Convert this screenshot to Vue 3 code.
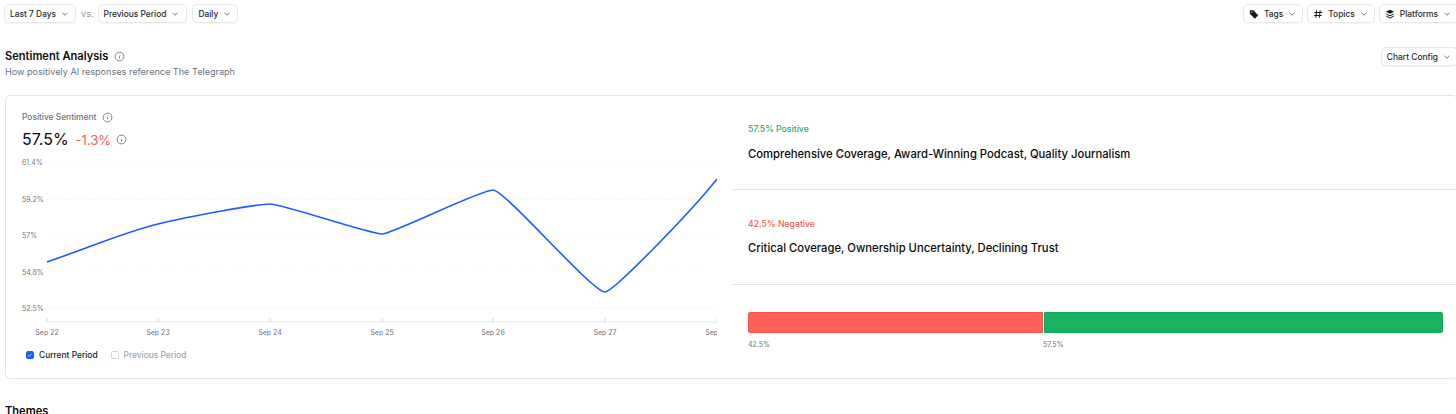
<script setup>
const filtersLeft = ["Last 7 Days"];
const filtersMid = ["Previous Period", "Daily"];
const yLabels = [
  { text: "61.4%", y: 162 },
  { text: "59.2%", y: 199 },
  { text: "57%", y: 235 },
  { text: "54.8%", y: 272 },
  { text: "52.5%", y: 308 },
];
const xLabels = [
  { text: "Sep 22", x: 47 },
  { text: "Sep 23", x: 158 },
  { text: "Sep 24", x: 270 },
  { text: "Sep 25", x: 382 },
  { text: "Sep 26", x: 493 },
  { text: "Sep 27", x: 605 },
  { text: "Sep 28", x: 717 },
];
// svg is placed at y=155 on the page, so subtract that from the chart values
const top = 155;
const linePath = `M47 ${262 - top} C85 ${249 - top} 125 ${232 - top} 158 ${224 - top} C190 ${216 - top} 258 ${204 - top} 270 ${204 - top} C282 ${204 - top} 370 ${234 - top} 382 ${234 - top} C392 ${234 - top} 480 ${190 - top} 493 ${190 - top} C505 ${190 - top} 592 ${292 - top} 605 ${292 - top} C613 ${292 - top} 690 ${213 - top} 717 ${179 - top}`;
</script>

<template>
  <div class="page">
    <div class="toolbar">
      <div class="group">
        <button v-for="f in filtersLeft" :key="f" class="btn">{{ f }}<svg class="chev" viewBox="0 0 10 10"><path d="M2.5 3.8 5 6.2l2.5-2.4" /></svg></button>
        <span class="vs">vs.</span>
        <div class="group mid">
          <button v-for="f in filtersMid" :key="f" class="btn">{{ f }}<svg class="chev" viewBox="0 0 10 10"><path d="M2.5 3.8 5 6.2l2.5-2.4" /></svg></button>
        </div>
      </div>
      <div class="group tight right">
        <button class="btn">
          <svg class="ico" viewBox="0 0 12 12"><path class="solid" fill-rule="evenodd" d="M1 1.5h4.2l5.3 5.300a1 1 0 0 1 0 1.400l-2.800 2.800a1 1 0 0 1-1.400 0L1 5.700zM3.400 2.900a.8.8 0 1 0 0 1.600.8.8 0 0 0 0-1.600z" /></svg>
          <span class="lbl">Tags</span><svg class="chev" viewBox="0 0 10 10"><path d="M2.5 3.8 5 6.2l2.5-2.4" /></svg>
        </button>
        <button class="btn">
          <svg class="ico" viewBox="0 0 12 12"><path class="line" d="M4.4 1.5 3.4 10.5M8.6 1.5l-1 9M1.5 4.2h9.2M1.2 7.8h9.2" /></svg>
          <span class="lbl">Topics</span><svg class="chev" viewBox="0 0 10 10"><path d="M2.5 3.8 5 6.2l2.5-2.4" /></svg>
        </button>
        <button class="btn">
          <svg class="ico" viewBox="0 0 12 12"><path class="solid" d="M6 .8 11 3.3 6 5.8 1 3.3z" /><path class="line" d="M1.5 6 6 8.2 10.500 6M1.500 8.600 6 10.800l4.500-2.200" /></svg>
          <span class="lbl">Platforms</span><svg class="chev" viewBox="0 0 10 10"><path d="M2.5 3.8 5 6.2l2.5-2.4" /></svg>
        </button>
      </div>
    </div>

    <div class="section-head">
      <div>
        <div class="title-row">
          <h2>Sentiment Analysis</h2>
          <svg class="info" viewBox="0 0 10 10"><circle cx="5" cy="5" r="4" /><path d="M5 4.700v2M5 3.100v.3" /></svg>
        </div>
        <p class="sub">How positively AI responses reference The Telegraph</p>
      </div>
      <button class="btn config">Chart Config<svg class="chev" viewBox="0 0 10 10"><path d="M2.5 3.8 5 6.2l2.5-2.4" /></svg></button>
    </div>

    <div class="card">
      <div class="left">
        <div class="metric-label">
          Positive Sentiment
          <svg class="info" viewBox="0 0 10 10"><circle cx="5" cy="5" r="4" /><path d="M5 4.700v2M5 3.100v.3" /></svg>
        </div>
        <div class="metric">
          <span class="big">57.5%</span>
          <span class="delta">-1.3%</span>
          <svg class="info" viewBox="0 0 10 10"><circle cx="5" cy="5" r="4" /><path d="M5 4.700v2M5 3.100v.3" /></svg>
        </div>
        <svg class="chart" width="717" height="184" viewBox="0 0 717 184">
          <defs>
            <pattern id="dots" width="6" height="6" patternUnits="userSpaceOnUse" x="47" y="7">
              <circle cx="1" cy="1" r="0.6" fill="#f5f5f6" />
            </pattern>
          </defs>
          <rect x="47" y="7" width="670" height="160" fill="url(#dots)" />
          <line v-for="l in yLabels" :key="l.text" x1="47" x2="717" :y1="l.y - top" :y2="l.y - top" stroke="#f4f4f5" stroke-width="1" stroke-dasharray="2 2" />
          <text v-for="l in yLabels" :key="'t' + l.text" class="axis" x="22" :y="l.y - top + 3">{{ l.text }}</text>
          <path d="M47 167H717" stroke="#e6e7e9" stroke-width="1" fill="none" />
          <g v-for="l in xLabels" :key="l.text">
            <line :x1="l.x" :x2="l.x" y1="163" y2="167" stroke="#d9dadc" />
            <text class="axis" :x="l.x" y="180" text-anchor="middle">{{ l.text }}</text>
          </g>
          <path :d="linePath" fill="none" stroke="#1a5cff" stroke-width="1.600" />
        </svg>
        <div class="legend">
          <span class="check on"><svg viewBox="0 0 8 8"><path d="M1.800 4.200 3.300 5.700 6.200 2.300" /></svg></span>
          <span class="cur">Current Period</span>
          <span class="check"></span>
          <span class="prev">Previous Period</span>
        </div>
      </div>
      <div class="right-col">
        <div class="block">
          <div class="tag pos">57.5% Positive</div>
          <div class="themes">Comprehensive Coverage, Award-Winning Podcast, Quality Journalism</div>
        </div>
        <div class="block second">
          <div class="tag neg">42.5% Negative</div>
          <div class="themes">Critical Coverage, Ownership Uncertainty, Declining Trust</div>
        </div>
        <div class="bar-wrap">
          <div class="bar">
            <div class="seg red"></div>
            <div class="seg green"></div>
          </div>
          <div class="bar-labels">
            <span class="lab-a">42.5%</span>
            <span>57.5%</span>
          </div>
        </div>
      </div>
    </div>

    <h2 class="next">Themes</h2>
  </div>
</template>

<style>
html,
body {
  margin: 0;
  overflow: hidden;
  background: #fff;
}
</style>

<style scoped>
.page {
  width: 1458px;
  height: 414px;
  overflow: hidden;
  font-family: Inter, "Liberation Sans", sans-serif;
  color: #0a0a0a;
  box-sizing: border-box;
  padding-top: 4px;
}
.toolbar {
  display: flex;
  justify-content: space-between;
  padding-left: 4px;
}
.group {
  display: flex;
  align-items: center;
}
.group.tight {
  gap: 4px;
}
.group.mid {
  gap: 5px;
}
.group.mid .btn:first-child {
  padding-right: 6px;
}
.btn {
  height: 19px;
  box-sizing: border-box;
  border: 1px solid #e8e8ea;
  border-radius: 5px;
  background: #fff;
  box-shadow: 0 1px 1px rgba(0, 0, 0, 0.04);
  font-family: inherit;
  font-size: 8.4px;
  font-weight: 500;
  color: #27272a;
  padding: 0 5px;
  display: flex;
  align-items: center;
  gap: 4px;
}
.chev {
  width: 10px;
  height: 10px;
}
.chev path {
  fill: none;
  stroke: #666;
  stroke-width: 0.9;
}
.ico {
  width: 10px;
  height: 10px;
  margin-right: 1px;
}
.solid {
  fill: #18181b;
}
.line {
  fill: none;
  stroke: #18181b;
  stroke-width: 1.2;
}
.vs {
  font-size: 9px;
  color: #8a8f98;
  margin: 0 4px 0 5px;
}
.section-head {
  display: flex;
  justify-content: space-between;
  align-items: flex-start;
  padding-left: 5px;
  margin-top: 25px;
}
.title-row {
  display: flex;
  align-items: center;
  gap: 6px;
  height: 16px;
}
h2 {
  margin: 0;
  font-size: 11.1px;
  font-weight: 600;
  line-height: 16px;
}
.sub {
  margin: 1px 0 0;
  font-size: 9.1px;
  line-height: 14px;
  color: #6b7280;
}
.info {
  width: 11px;
  height: 11px;
  flex: none;
}
.info circle,
.info path {
  fill: none;
  stroke: #71717a;
  stroke-width: 0.8;
}
.config {
  margin-top: -1px;
}
.card {
  margin: 16px 0 0 5px;
  height: 284px;
  box-sizing: border-box;
  border: 1px solid #e4e4e7;
  border-radius: 5px;
  display: flex;
}
.left {
  width: 726px;
  flex: none;
  position: relative;
  box-sizing: border-box;
  padding-left: 16px;
  padding-top: 15px;
  overflow: hidden;
}
.metric-label {
  display: flex;
  align-items: center;
  gap: 6px;
  font-size: 8.4px;
  font-weight: 500;
  line-height: 12px;
  color: #71717a;
}
.metric {
  display: flex;
  align-items: center;
  margin-top: 6px;
  height: 20px;
}
.big {
  font-size: 16px;
  font-weight: 400;
  color: #0a0a0a;
}
.delta {
  font-size: 13px;
  color: #fb5a52;
  margin: 1px 5px 0 7px;
}
.chart {
  display: block;
  margin: 6px 0 0 -22px;
}
.axis {
  font-size: 7px;
  fill: #71717a;
}
.legend {
  display: flex;
  align-items: center;
  margin-top: 10px;
  padding-left: 4px;
  font-size: 8.4px;
  font-weight: 500;
  line-height: 12px;
}
.check {
  width: 6px;
  height: 6px;
  border: 1px solid #d4d4d8;
  border-radius: 2px;
  display: inline-block;
  margin-right: 5px;
}
.check.on {
  background: #1a5cff;
  border-color: #1a5cff;
}
.check svg {
  display: block;
  width: 6px;
  height: 6px;
}
.check path {
  fill: none;
  stroke: #fff;
  stroke-width: 1;
}
.cur {
  margin-right: 13px;
  color: #18181b;
}
.prev {
  color: #a1a1aa;
}
.right-col {
  flex: 1;
  min-width: 0;
}
.block {
  border-bottom: 1px solid #e4e4e7;
  padding: 27px 0 0 16px;
  height: 66px;
}
.block.second {
  padding-top: 28px;
}
.block.second .themes {
  margin-top: 10px;
}
.tag {
  font-size: 8.7px;
  font-weight: 500;
  line-height: 12px;
}
.pos {
  color: #16b364;
}
.neg {
  color: #fb5a52;
}
.themes {
  margin-top: 11px;
  font-size: 11.25px;
  font-weight: 500;
  line-height: 16px;
  color: #0a0a0a;
}
.bar-wrap {
  padding: 27px 0 0 16px;
  width: 695px;
}
.bar {
  display: flex;
  height: 21px;
  gap: 1px;
}
.seg {
  box-sizing: border-box;
}
.red {
  width: 295px;
  background: #fe5f57;
  border: 1px solid #f9534a;
  border-radius: 2px 0 0 2px;
}
.green {
  flex: 1;
  background: #17b361;
  border: 1px solid #12a857;
  border-radius: 0 2px 2px 0;
}
.bar-labels {
  display: flex;
  margin-top: 7px;
  font-size: 7px;
  line-height: 10px;
  color: #71717a;
}
.lab-a {
  width: 295px;
}
.next {
  margin: 24px 0 0 5px;
}
</style>
